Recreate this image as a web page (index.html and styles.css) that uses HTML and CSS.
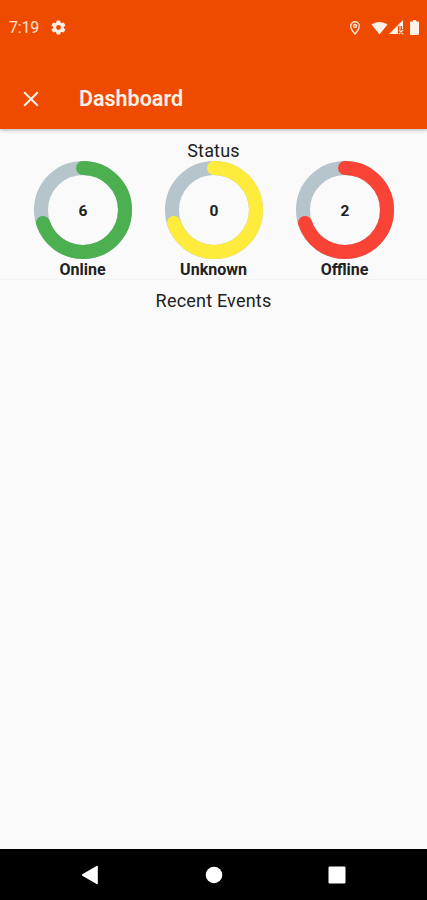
FILE: index.html
```
<!DOCTYPE html>
<html lang="en">
<head>
    <meta charset="UTF-8">
    <meta name="viewport" content="width=device-width, initial-scale=1.0">
    <title>Dashboard</title>
    <link rel="stylesheet" href="styles.css">
</head>
<body>
    <div class="screen">
        <header class="app-header">
            <div class="status-bar">
                <span class="clock">7:19</span>
                <svg class="icon-gear" width="17" height="17" viewBox="0 0 24 24">
                    <path fill-rule="evenodd" d="M19.4 13a7.600 7.600 0 0 0 0-2l2.100-1.600a.5.5 0 0 0 .1-.6l-2-3.500a.5.5 0 0 0-.6-.2l-2.500 1a7 7 0 0 0-1.700-1l-.4-2.600a.5.5 0 0 0-.5-.4h-4a.5.5 0 0 0-.5.4L9 5.100a7 7 0 0 0-1.700 1l-2.500-1a.5.5 0 0 0-.6.2l-2 3.500a.5.5 0 0 0 .1.6L4.500 11a7.600 7.600 0 0 0 0 2l-2.200 1.600a.5.5 0 0 0-.1.6l2 3.500c.1.2.4.3.6.2l2.500-1a7 7 0 0 0 1.700 1l.4 2.600c0 .3.2.4.5.4h4c.3 0 .5-.1.500-.4l.4-2.600a7 7 0 0 0 1.700-1l2.500 1c.2.1.5 0 .6-.2l2-3.500a.5.5 0 0 0-.1-.6zM12 15.400a3.400 3.400 0 1 1 0-6.800 3.400 3.400 0 0 1 0 6.800z"/>
                </svg>
                <div class="system-icons">
                    <svg class="icon-pin" width="12" height="16" viewBox="0 0 12 16">
                        <path d="M6 1.700a4.300 4.300 0 0 0-4.300 4.300C1.700 9.200 6 14 6 14s4.300-4.800 4.300-8A4.300 4.300 0 0 0 6 1.700z"/>
                        <circle cx="6" cy="6" r="1.500"/>
                    </svg>
                    <svg class="icon-wifi" width="17" height="14" viewBox="0 0 17 14">
                        <path d="M.5 3.600C5 .1 12 .1 16.500 3.600L8.500 13.500z"/>
                    </svg>
                    <svg class="icon-signal" width="15" height="15" viewBox="0 0 15 15">
                        <path d="M0 14L14 0v6H9v8z"/>
                        <path class="signal-mark" d="M11 6v3.500M10 10l4 4M14 10l-4 4M13.500 6v3"/>
                    </svg>
                    <svg class="icon-battery" width="9" height="15" viewBox="0 0 9 15">
                        <path d="M2.800 0h3.400v1.500H8q1 0 1 1V14q0 1-1 1H1q-1 0-1-1V2.500q0-1 1-1h1.800z"/>
                    </svg>
                </div>
            </div>
            <div class="toolbar">
                <svg class="icon-close" width="16" height="16" viewBox="0 0 16 16">
                    <path d="M1.200 1.200l13.600 13.600M14.800 1.200L1.200 14.800"/>
                </svg>
                <h1>Dashboard</h1>
            </div>
        </header>

        <main class="content">
            <section class="status-section">
                <h2>Status</h2>
                <div class="gauges">
                    <div class="gauge online">
                        <svg width="98" height="98" viewBox="0 0 98 98">
                            <circle class="track" cx="49" cy="49" r="42"/>
                            <circle class="progress" cx="49" cy="49" r="42" pathLength="100" transform="rotate(-90 49 49)"/>
                            <text x="49" y="54.500">6</text>
                        </svg>
                        <span class="gauge-label">Online</span>
                    </div>
                    <div class="gauge unknown">
                        <svg width="98" height="98" viewBox="0 0 98 98">
                            <circle class="track" cx="49" cy="49" r="42"/>
                            <circle class="progress" cx="49" cy="49" r="42" pathLength="100" transform="rotate(-90 49 49)"/>
                            <text x="49" y="54.500">0</text>
                        </svg>
                        <span class="gauge-label">Unknown</span>
                    </div>
                    <div class="gauge offline">
                        <svg width="98" height="98" viewBox="0 0 98 98">
                            <circle class="track" cx="49" cy="49" r="42"/>
                            <circle class="progress" cx="49" cy="49" r="42" pathLength="100" transform="rotate(-90 49 49)"/>
                            <text x="49" y="54.500">2</text>
                        </svg>
                        <span class="gauge-label">Offline</span>
                    </div>
                </div>
            </section>
            <section class="events-section">
                <h2>Recent Events</h2>
            </section>
        </main>

        <nav class="nav-bar">
            <svg width="18" height="20" viewBox="0 0 18 20">
                <path d="M1.300 9.300L16 .8q.8-.4.800.5v17.400q0 .9-.8.500L1.300 10.700q-1-.7 0-1.400z"/>
            </svg>
            <svg width="18" height="18" viewBox="0 0 18 18">
                <circle cx="9" cy="9" r="8.300"/>
            </svg>
            <svg width="18" height="18" viewBox="0 0 18 18">
                <rect x=".5" y=".5" width="17" height="17" rx="1.200"/>
            </svg>
        </nav>
    </div>
</body>
</html>
```
FILE: styles.css
```
* {
    box-sizing: border-box;
}

body {
    margin: 0;
    font-family: Roboto, "Liberation Sans", sans-serif;
    background-color: #fafafa;
    color: #212121;
}

h1, h2 {
    margin: 0;
}

svg {
    display: block;
    flex: none;
}

.screen {
    display: flex;
    flex-direction: column;
    height: 900px;
    overflow: hidden;
}

.app-header {
    height: 129px;
    background-color: #ee4b00;
    color: #fff;
    box-shadow: 0 1px 4px rgba(0, 0, 0, 0.3);
}

.status-bar {
    display: flex;
    align-items: center;
    height: 55px;
    padding: 0 8px 0 9px;
    fill: #fff1e8;
}

.clock {
    width: 41px;
    font-size: 16px;
    letter-spacing: -0.2px;
    color: #ffe0cf;
}

.system-icons {
    display: flex;
    align-items: center;
    margin-left: auto;
}

.icon-pin {
    margin-right: 10px;
    fill: none;
    stroke: #ffe6d9;
    stroke-width: 1.4;
}

.icon-wifi {
    margin-right: 1px;
}

.icon-signal {
    margin-right: 6px;
}

.signal-mark {
    fill: none;
    stroke: #fff1e8;
    stroke-width: 1.1;
}

.toolbar {
    display: flex;
    align-items: center;
    height: 74px;
    padding: 14px 23px 0;
}

.icon-close {
    fill: none;
    stroke: #fff1e8;
    stroke-width: 2;
}

.toolbar h1 {
    margin-left: 40px;
    font-size: 21.500px;
    font-weight: 600;
    line-height: 28px;
    color: #fff1e8;
}

.content {
    flex: 1;
}

.content h2 {
    font-size: 18px;
    font-weight: 400;
    line-height: 22px;
    letter-spacing: 0.2px;
    text-align: center;
}

.status-section {
    height: 151px;
    padding: 11px 17px 0;
    border-bottom: 1px solid #f2f2f2;
}

.gauges {
    display: grid;
    grid-template-columns: repeat(3, 1fr);
    margin-top: -1px;
}

.gauge {
    display: flex;
    flex-direction: column;
    align-items: center;
}

.gauge circle {
    fill: none;
    stroke-width: 14;
}

.track {
    stroke: #b5c5cb;
}

.progress {
    stroke-linecap: round;
    stroke-dasharray: 70 100;
}

.online .progress {
    stroke: #4caf50;
}

.unknown .progress {
    stroke: #ffeb3b;
}

.offline .progress {
    stroke: #f94336;
}

.gauge text {
    font-size: 15.500px;
    font-weight: 700;
    text-anchor: middle;
    fill: #212121;
}

.gauge-label {
    font-size: 16px;
    font-weight: 700;
    line-height: 21px;
}

.events-section {
    padding-top: 10px;
}

.nav-bar {
    display: flex;
    align-items: center;
    justify-content: space-between;
    height: 51px;
    padding: 0 81px;
    background-color: #000;
    fill: #fff;
}
```
